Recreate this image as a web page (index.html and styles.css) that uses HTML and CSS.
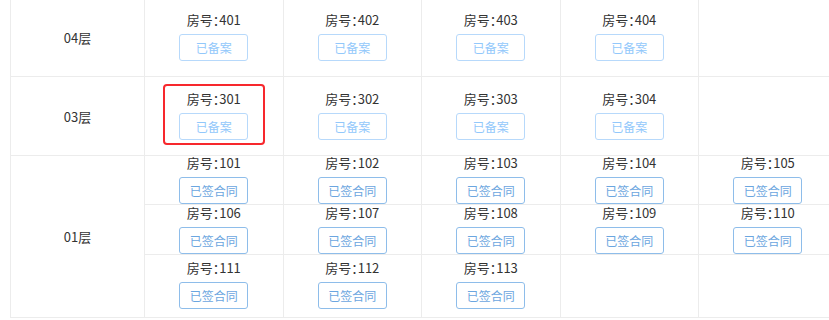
FILE: index.html
```html
<!DOCTYPE html>
<html>
<head>
  <meta charset="utf-8">
  <title>楼栋房源</title>
  <link rel="stylesheet" href="styles.css">
</head>
<body>
  <div class="floor-table">

    <div class="floor">
      <div class="floor-name">04层</div>
      <div class="rooms">
        <div class="room-cell"><div class="room"><span class="room-no">房号：401</span><button class="btn btn-filed">已备案</button></div></div>
        <div class="room-cell"><div class="room"><span class="room-no">房号：402</span><button class="btn btn-filed">已备案</button></div></div>
        <div class="room-cell"><div class="room"><span class="room-no">房号：403</span><button class="btn btn-filed">已备案</button></div></div>
        <div class="room-cell"><div class="room"><span class="room-no">房号：404</span><button class="btn btn-filed">已备案</button></div></div>
        <div class="room-cell"></div>
      </div>
    </div>

    <div class="floor">
      <div class="floor-name">03层</div>
      <div class="rooms">
        <div class="room-cell"><div class="room picked"><span class="room-no">房号：301</span><button class="btn btn-filed">已备案</button></div></div>
        <div class="room-cell"><div class="room"><span class="room-no">房号：302</span><button class="btn btn-filed">已备案</button></div></div>
        <div class="room-cell"><div class="room"><span class="room-no">房号：303</span><button class="btn btn-filed">已备案</button></div></div>
        <div class="room-cell"><div class="room"><span class="room-no">房号：304</span><button class="btn btn-filed">已备案</button></div></div>
        <div class="room-cell"></div>
      </div>
    </div>

    <div class="floor">
      <div class="floor-name">01层</div>
      <div class="rooms rooms-multi">
        <div class="room-cell"><div class="room"><span class="room-no">房号：101</span><button class="btn btn-signed">已签合同</button></div></div>
        <div class="room-cell"><div class="room"><span class="room-no">房号：102</span><button class="btn btn-signed">已签合同</button></div></div>
        <div class="room-cell"><div class="room"><span class="room-no">房号：103</span><button class="btn btn-signed">已签合同</button></div></div>
        <div class="room-cell"><div class="room"><span class="room-no">房号：104</span><button class="btn btn-signed">已签合同</button></div></div>
        <div class="room-cell"><div class="room"><span class="room-no">房号：105</span><button class="btn btn-signed">已签合同</button></div></div>
        <div class="room-cell"><div class="room"><span class="room-no">房号：106</span><button class="btn btn-signed">已签合同</button></div></div>
        <div class="room-cell"><div class="room"><span class="room-no">房号：107</span><button class="btn btn-signed">已签合同</button></div></div>
        <div class="room-cell"><div class="room"><span class="room-no">房号：108</span><button class="btn btn-signed">已签合同</button></div></div>
        <div class="room-cell"><div class="room"><span class="room-no">房号：109</span><button class="btn btn-signed">已签合同</button></div></div>
        <div class="room-cell"><div class="room"><span class="room-no">房号：110</span><button class="btn btn-signed">已签合同</button></div></div>
        <div class="room-cell"><div class="room"><span class="room-no">房号：111</span><button class="btn btn-signed">已签合同</button></div></div>
        <div class="room-cell"><div class="room"><span class="room-no">房号：112</span><button class="btn btn-signed">已签合同</button></div></div>
        <div class="room-cell"><div class="room"><span class="room-no">房号：113</span><button class="btn btn-signed">已签合同</button></div></div>
        <div class="room-cell"></div>
        <div class="room-cell"></div>
      </div>
    </div>

  </div>
</body>
</html>
```

FILE: styles.css
```css
html, body{
    margin:0;
    overflow:hidden;
    background:#fff;
}

body{
    font-family:"Noto Sans CJK SC", "Liberation Sans", sans-serif;
    font-size:13px;
    color:#333;
}

/* table scrolled a few px, top border is just out of view */
.floor-table{
    margin:-3px 0 0 10px;
    border-top:1px solid #ececec;
    border-left:1px solid #ececec;
    width:max-content;
}

.floor{
    display:grid;
    grid-template-columns:134px auto;
    border-bottom:1px solid #ececec;
}

.floor-name{
    display:flex;
    align-items:center;
    justify-content:center;
    border-right:1px solid #ececec;
    box-sizing:border-box;
}

.rooms{
    display:grid;
    grid-template-columns:repeat(5, 138.5px);
}

.room-cell{
    display:flex;
    justify-content:center;
    padding:12px 0 15px;
    border-right:1px solid #ececec;
    box-sizing:border-box;
}

/* 01 floor: three rows of rooms in one floor */
.rooms-multi{
    grid-template-rows:49px 50px 62px;
}
.rooms-multi .room-cell{
    align-items:flex-end;
    padding:0;
    border-bottom:1px solid #ececec;
}
.rooms-multi .room-cell:nth-child(n+11){
    padding-bottom:8px;
    border-bottom:0;
}

.room{
    position:relative;
    display:flex;
    flex-direction:column;
    align-items:center;
}

.room-no{
    line-height:20px;
    font-feature-settings:"palt";
    word-spacing:2px;
}

.room.picked:after{
    content:"";
    position:absolute;
    top:-5px;
    bottom:-5px;
    left:-16.5px;
    right:-16.5px;
    border:2px solid #f7282d;
    border-radius:4px;
}

.btn{
    margin-top:4px;
    width:69px;
    height:27px;
    padding:0;
    background:#fff;
    border:1px solid;
    border-radius:3px;
    font-family:inherit;
    font-size:12px;
    cursor:pointer;
}

.btn-filed{
    color:#92c8fb;
    border-color:#b7d9fb;
}

.btn-signed{
    color:#6ba6e0;
    border-color:#8ebdea;
}
```
